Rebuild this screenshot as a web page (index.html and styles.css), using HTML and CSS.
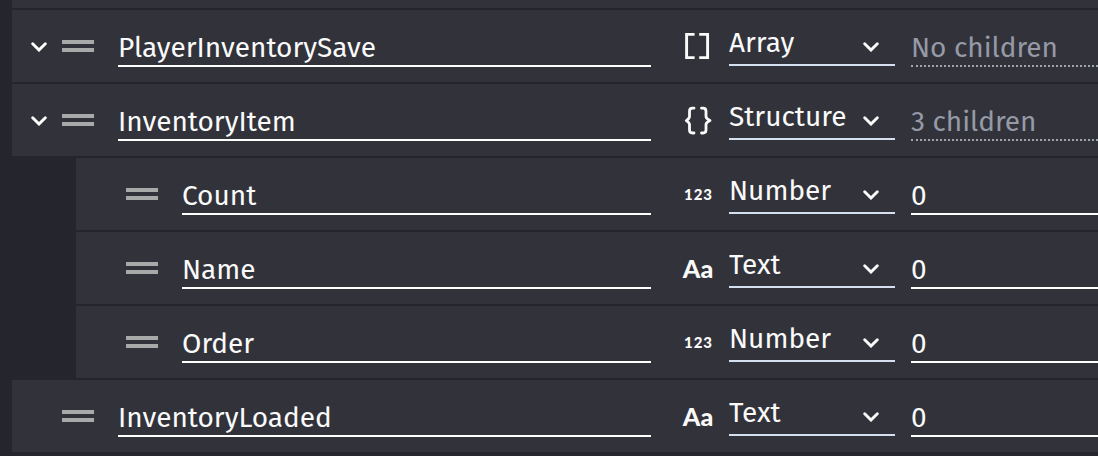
FILE: index.html
```html
<!DOCTYPE html>
<html lang="en">
<head>
<meta charset="utf-8">
<title>Variables</title>
<link rel="stylesheet" href="styles.css">
</head>
<body>
<svg class="defs" aria-hidden="true">
  <symbol id="chevron" viewBox="0 0 16 10"><path d="M1.700 1.700 8 8 14.300 1.700" fill="none" stroke="currentColor" stroke-width="2.900" stroke-linecap="round" stroke-linejoin="miter"/></symbol>
  <symbol id="handle" viewBox="0 0 32 12"><path d="M0 0h32v4H0zM0 8h32v4H0z" fill="currentColor"/></symbol>
  <symbol id="brackets" viewBox="0 0 30 30"><path d="M11.600 3.400H3.600V26.600H11.600M16.200 3.400H24.600V26.600H16.200" fill="none" stroke="currentColor" stroke-width="2.900"/></symbol>
  <symbol id="braces" viewBox="0 0 30 30"><path d="M11 3.200H9.500Q6.500 3.200 6.500 6.200V11.600Q6.500 13.600 3.300 15.600Q6.500 17.600 6.500 19.600V25Q6.500 28 9.500 28H11M18.500 3.200H20Q23 3.200 23 6.200V11.600Q23 13.600 27 15.600Q23 17.600 23 19.600V25Q23 28 20 28H18.500" fill="none" stroke="currentColor" stroke-width="2.800" stroke-linecap="round" stroke-linejoin="round"/></symbol>
</svg>
<main class="list">
  <div class="row row-cut"></div>

  <div class="row">
    <button class="toggle" aria-label="Collapse PlayerInventorySave"><svg class="chevron"><use href="#chevron"/></svg></button>
    <svg class="handle"><use href="#handle"/></svg>
    <input class="field name" aria-label="Name" value="PlayerInventorySave">
    <span class="kind"><svg class="kind-svg"><use href="#brackets"/></svg></span>
    <span class="picker"><select class="select" aria-label="Type"><option>Array</option></select><svg class="chevron arrow"><use href="#chevron"/></svg></span>
    <input class="field value empty" aria-label="Value" value="No children" readonly>
  </div>

  <div class="row">
    <button class="toggle" aria-label="Collapse InventoryItem"><svg class="chevron"><use href="#chevron"/></svg></button>
    <svg class="handle"><use href="#handle"/></svg>
    <input class="field name" aria-label="Name" value="InventoryItem">
    <span class="kind"><svg class="kind-svg"><use href="#braces"/></svg></span>
    <span class="picker"><select class="select" aria-label="Type"><option>Structure</option></select><svg class="chevron arrow"><use href="#chevron"/></svg></span>
    <input class="field value empty" aria-label="Value" value="3 children" readonly>
  </div>

  <div class="children">
    <div class="row">
      <span class="toggle"></span>
      <svg class="handle"><use href="#handle"/></svg>
      <input class="field name" aria-label="Name" value="Count">
      <span class="kind digits"><span>1</span><span>2</span><span>3</span></span>
      <span class="picker"><select class="select" aria-label="Type"><option>Number</option></select><svg class="chevron arrow"><use href="#chevron"/></svg></span>
      <input class="field value" aria-label="Value" value="0">
    </div>

    <div class="row">
      <span class="toggle"></span>
      <svg class="handle"><use href="#handle"/></svg>
      <input class="field name" aria-label="Name" value="Name">
      <span class="kind letters">Aa</span>
      <span class="picker"><select class="select" aria-label="Type"><option>Text</option></select><svg class="chevron arrow"><use href="#chevron"/></svg></span>
      <input class="field value" aria-label="Value" value="0">
    </div>

    <div class="row">
      <span class="toggle"></span>
      <svg class="handle"><use href="#handle"/></svg>
      <input class="field name" aria-label="Name" value="Order">
      <span class="kind digits"><span>1</span><span>2</span><span>3</span></span>
      <span class="picker"><select class="select" aria-label="Type"><option>Number</option></select><svg class="chevron arrow"><use href="#chevron"/></svg></span>
      <input class="field value" aria-label="Value" value="0">
    </div>
  </div>

  <div class="row">
    <span class="toggle"></span>
    <svg class="handle"><use href="#handle"/></svg>
    <input class="field name" aria-label="Name" value="InventoryLoaded">
    <span class="kind letters">Aa</span>
    <span class="picker"><select class="select" aria-label="Type"><option>Text</option></select><svg class="chevron arrow"><use href="#chevron"/></svg></span>
    <input class="field value" aria-label="Value" value="0">
  </div>
</main>
</body>
</html>
```
FILE: styles.css
```css
* {
  box-sizing: border-box;
}

body {
  margin: 0;
  background: #25252e;
  color: #fafafa;
  font-family: "Fira Sans", "Noto Sans", sans-serif;
  font-size: 28px;
  line-height: 32px;
}

.defs {
  display: none;
}

.list,
.children {
  display: flex;
  flex-direction: column;
  gap: 2px;
}

.list {
  padding-left: 12px;
}

.children {
  padding-left: 64px;
}

.row {
  display: flex;
  align-items: flex-start;
  padding: 12px 0 10px;
  background: #32323b;
}

.row-cut {
  padding: 4px 0;
}

.toggle {
  display: flex;
  align-items: center;
  justify-content: center;
  flex: none;
  width: 32px;
  height: 50px;
  margin: 0 7px 0 11px;
  padding: 0;
  border: 0;
  background: none;
  color: #fff;
}

.chevron {
  width: 16px;
  height: 10px;
}

.handle {
  flex: none;
  width: 32px;
  height: 12px;
  margin: 18px 24px 0 0;
  color: #a9a9a9;
}

.field {
  height: 45px;
  min-width: 0;
  padding: 9px 0 2px;
  border: 0;
  border-bottom: 2px solid #fff;
  border-radius: 0;
  outline: 0;
  background: none;
  color: inherit;
  font: inherit;
}

.name {
  flex: 1;
}

.value {
  flex: none;
  width: 187px;
}

.empty {
  border-bottom: 2px dotted #a0a4af;
  color: #959aa6;
}

.kind {
  display: flex;
  align-items: center;
  justify-content: center;
  flex: none;
  width: 30px;
  height: 48px;
  margin: 0 16px 0 32px;
}

.kind-svg {
  width: 30px;
  height: 30px;
}

.digits {
  gap: 1px;
  font-family: Lato, sans-serif;
  font-size: 15px;
  font-weight: 900;
}

.letters {
  font-family: Lato, sans-serif;
  font-size: 25px;
  font-weight: 900;
}

.picker {
  position: relative;
  flex: none;
  width: 166px;
  margin-right: 16px;
}

.select {
  display: block;
  width: 100%;
  height: 44px;
  padding: 5px 40px 5px 0;
  border: 0;
  border-bottom: 2px solid #d6dfee;
  border-radius: 0;
  outline: 0;
  appearance: none;
  background: none;
  color: inherit;
  font: inherit;
}

.arrow {
  position: absolute;
  top: 20px;
  right: 16px;
  pointer-events: none;
}
```
